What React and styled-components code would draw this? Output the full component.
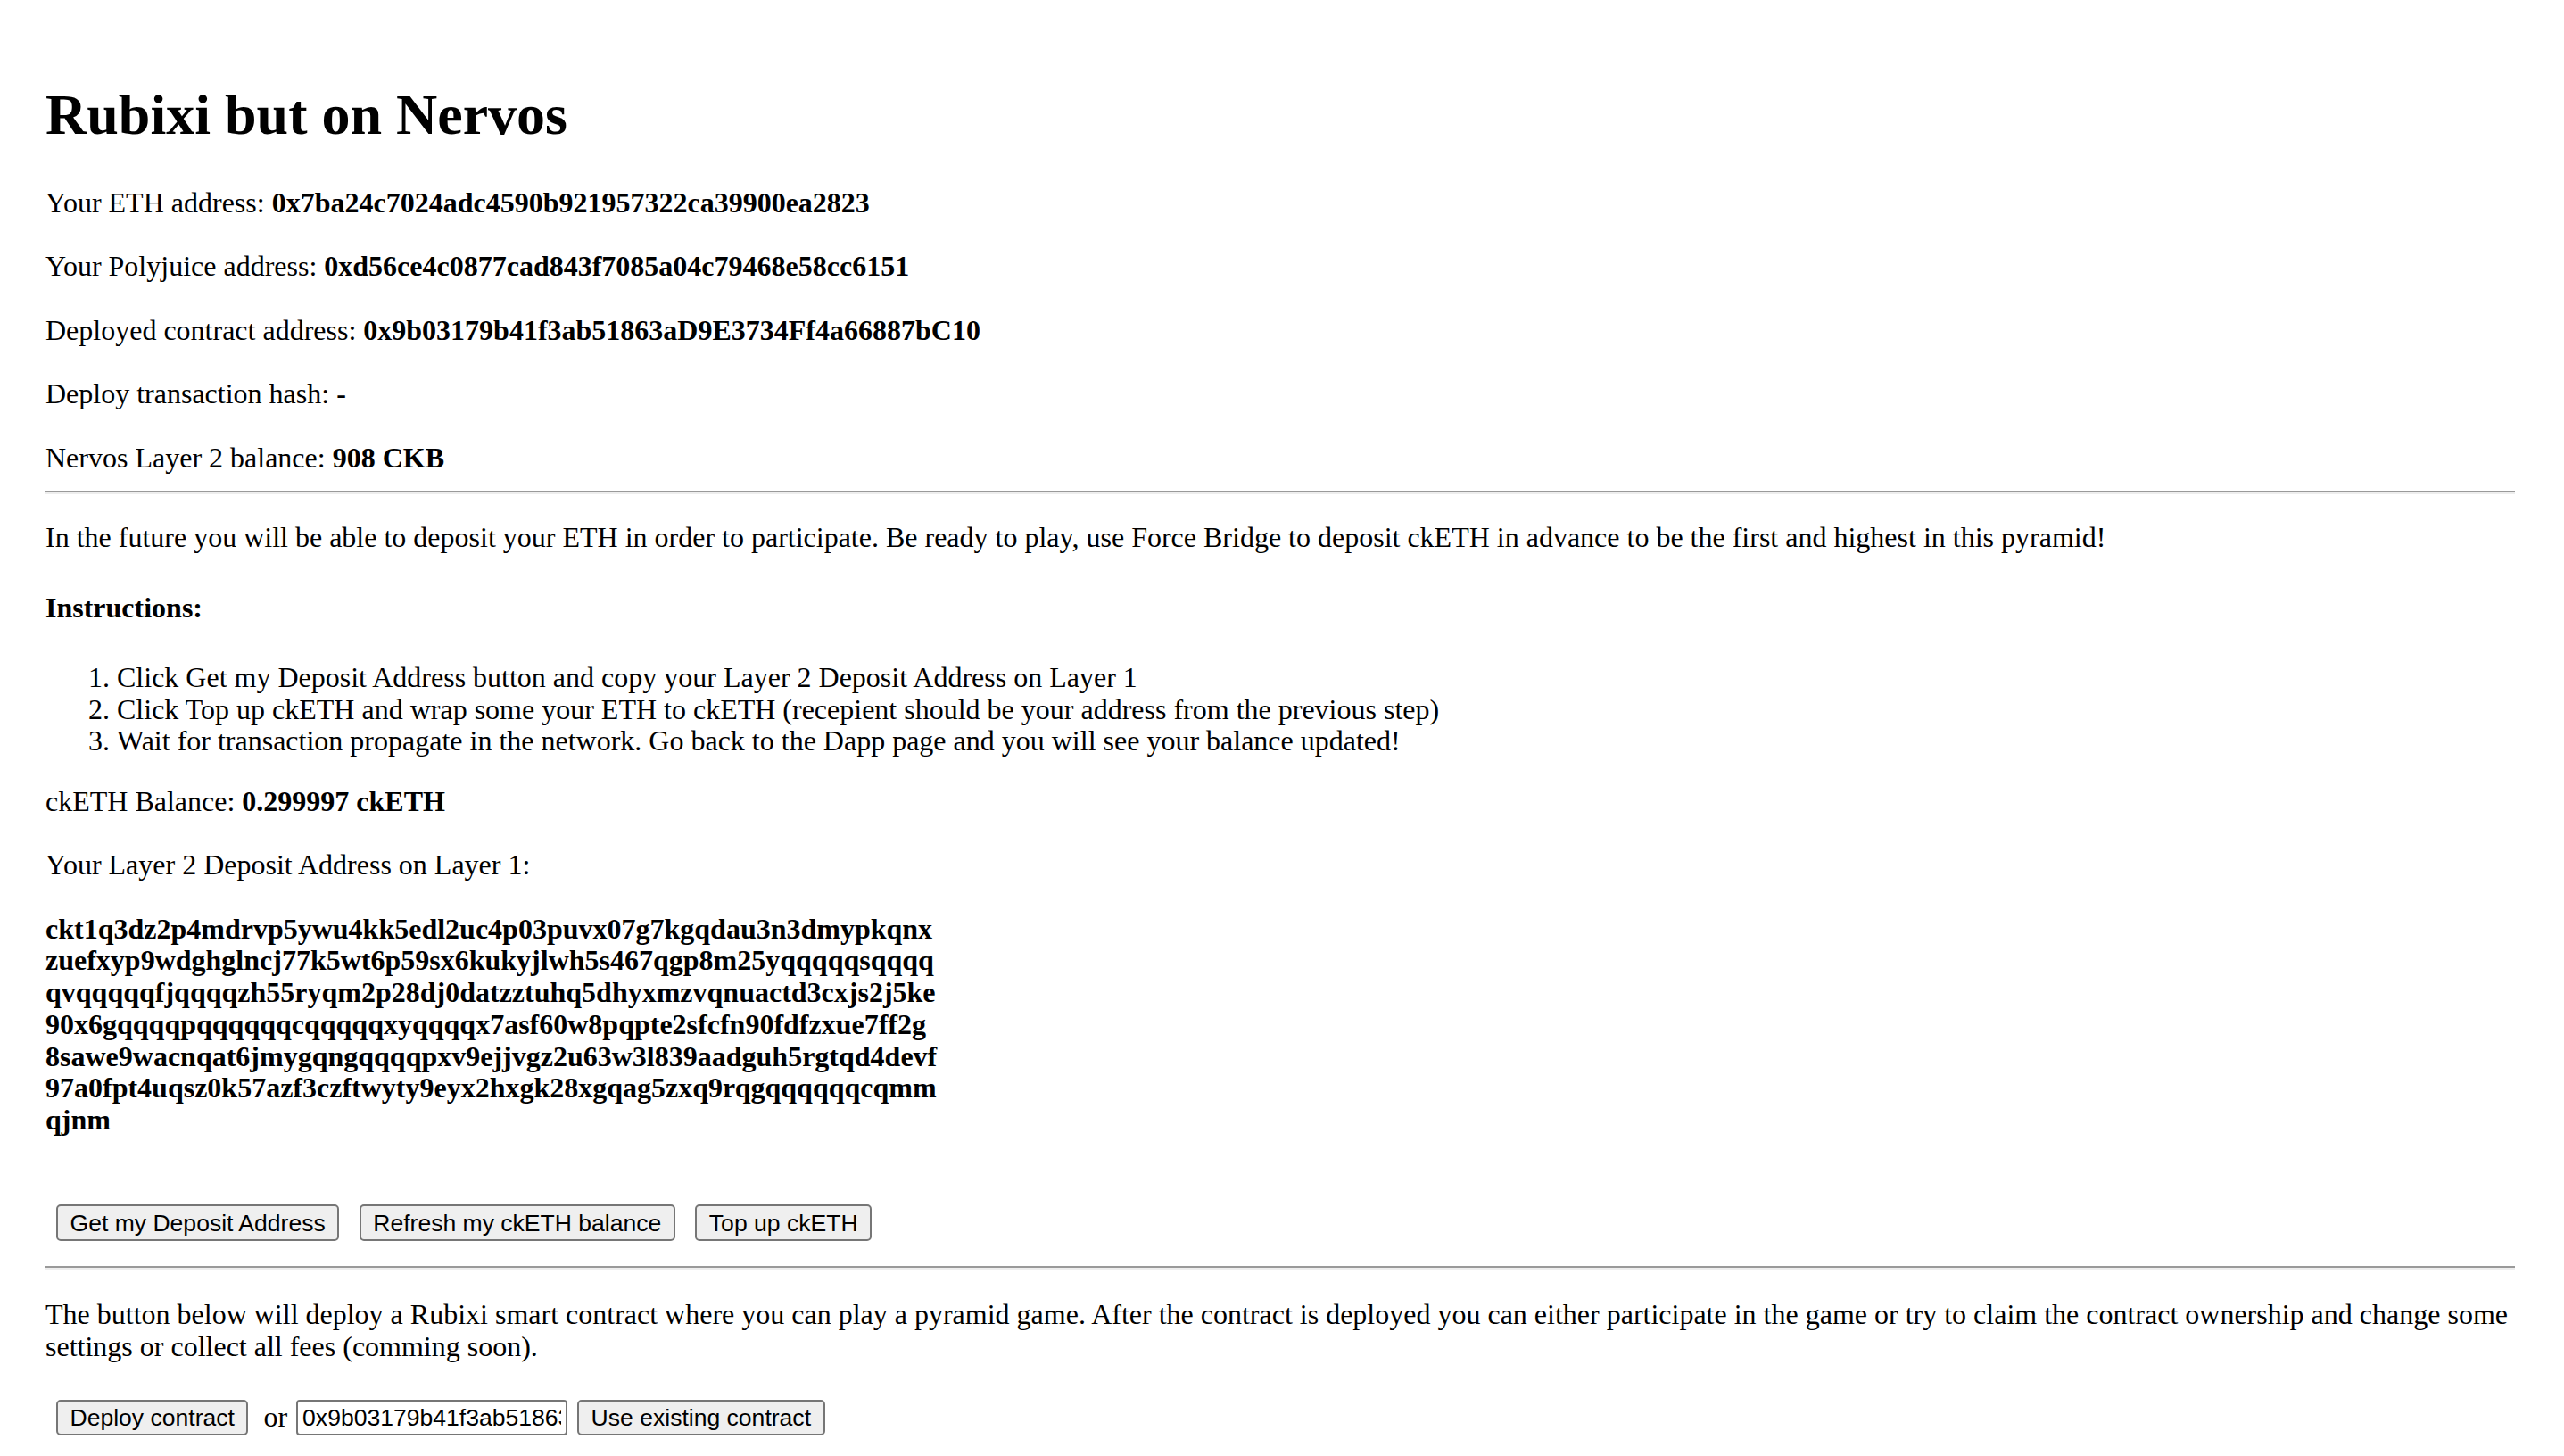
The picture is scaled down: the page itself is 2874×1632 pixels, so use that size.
import React from "react";
import styled, { createGlobalStyle } from "styled-components";

const GlobalStyle = createGlobalStyle`
  html, body {
    margin: 0;
    padding: 0;
    background: #ffffff;
  }
  body {
    font-family: "Liberation Serif", "Times New Roman", Times, serif;
    font-size: 32px;
    color: #000000;
  }
`;

const Page = styled.div`
  box-sizing: border-box;
  width: 100%;
  padding: 92px 55px 0 51px;
  font-family: "Liberation Serif", "Times New Roman", Times, serif;
  font-size: 32px;
  line-height: 35.75px;
  color: #000;
`;

const Title = styled.h1`
  margin: 0;
  font-size: 64px;
  line-height: 74px;
  font-weight: 700;
`;

const InfoList = styled.div`
  display: flex;
  flex-direction: column;
  align-items: flex-start;
  gap: 35.75px;
  margin-top: ${(p) => p.$top}px;
`;

const InfoLine = styled.div`
  line-height: 35.75px;
  white-space: nowrap;
`;

const Value = styled.b`
  font-weight: 700;
`;

const DepositAddress = styled.div`
  width: 1000px;
  font-weight: 700;
  line-height: 35.75px;
  word-break: break-all;
`;

const Rule = styled.hr`
  height: 0;
  margin: ${(p) => p.$top}px 0 0 0;
  border: 0;
  border-top: 2px solid #9a9a9a;
  border-bottom: 2px solid #eeeeee;
`;

const Paragraph = styled.p`
  margin: ${(p) => p.$top}px 0 0 0;
  line-height: 35.75px;
`;

const SubHeading = styled.h4`
  margin: 42.6px 0 0 0;
  font-size: 32px;
  line-height: 35.75px;
  font-weight: 700;
`;

const Steps = styled.ol`
  margin: 42.5px 0 0 0;
  padding-left: 80px;
  line-height: 35.75px;
`;

const ButtonRow = styled.div`
  display: flex;
  align-items: center;
  margin-top: ${(p) => p.$top}px;
  padding-left: 12px;
  gap: ${(p) => p.$gap || 0}px;
`;

const Button = styled.button`
  box-sizing: border-box;
  height: ${(p) => p.$h || 41}px;
  padding: 0 13.5px;
  margin: 0;
  font-family: "Liberation Sans", Arial, Helvetica, sans-serif;
  font-size: 26.55px;
  line-height: 1;
  color: #000;
  background: #efefef;
  border: 2px solid #767676;
  border-radius: 5px;
  white-space: nowrap;
  cursor: default;
`;

const OrText = styled.span`
  margin: 0 10px 0 17px;
  font-size: 32px;
  line-height: 35.75px;
`;

const AddressInput = styled.input`
  box-sizing: border-box;
  width: 304px;
  height: 40px;
  margin: 0 11px 0 0;
  padding: 0 5px;
  font-family: "Liberation Sans", Arial, Helvetica, sans-serif;
  font-size: 26.55px;
  color: #000;
  background: #fff;
  border: 2px solid #767676;
  border-radius: 4px;
  outline: none;
`;

export default function App() {
  return (
    <>
      <GlobalStyle />
      <Page>
        <Title>Rubixi but on Nervos</Title>
        <InfoList $top={43.5}>
          <InfoLine>
            Your ETH address: <Value>0x7ba24c7024adc4590b921957322ca39900ea2823</Value>
          </InfoLine>
          <InfoLine>
            Your Polyjuice address: <Value>0xd56ce4c0877cad843f7085a04c79468e58cc6151</Value>
          </InfoLine>
          <InfoLine>
            Deployed contract address: <Value>0x9b03179b41f3ab51863aD9E3734Ff4a66887bC10</Value>
          </InfoLine>
          <InfoLine>
            Deploy transaction hash: <Value>-</Value>
          </InfoLine>
          <InfoLine>
            Nervos Layer 2 balance: <Value>908 CKB</Value>
          </InfoLine>
        </InfoList>
        <Rule $top={18.5} />
        <Paragraph $top={31.5}>
          In the future you will be able to deposit your ETH in order to participate. Be ready to play, use Force Bridge to deposit ckETH in advance to be the first and highest in this pyramid!
        </Paragraph>
        <SubHeading>Instructions:</SubHeading>
        <Steps>
          <li>Click Get my Deposit Address button and copy your Layer 2 Deposit Address on Layer 1</li>
          <li>Click Top up ckETH and wrap some your ETH to ckETH (recepient should be your address from the previous step)</li>
          <li>Wait for transaction propagate in the network. Go back to the Dapp page and you will see your balance updated!</li>
        </Steps>
        <InfoList $top={31.5}>
          <InfoLine>
            ckETH Balance: <Value>0.299997 ckETH</Value>
          </InfoLine>
          <InfoLine>Your Layer 2 Deposit Address on Layer 1:</InfoLine>
          <DepositAddress>
            ckt1q3dz2p4mdrvp5ywu4kk5edl2uc4p03puvx07g7kgqdau3n3dmypkqnxzuefxyp9wdghglncj77k5wt6p59sx6kukyjlwh5s467qgp8m25yqqqqqsqqqqqvqqqqqfjqqqqzh55ryqm2p28dj0datzztuhq5dhyxmzvqnuactd3cxjs2j5ke90x6gqqqqpqqqqqqcqqqqqxyqqqqx7asf60w8pqpte2sfcfn90fdfzxue7ff2g8sawe9wacnqat6jmygqngqqqqpxv9ejjvgz2u63w3l839aadguh5rgtqd4devf97a0fpt4uqsz0k57azf3czftwyty9eyx2hxgk28xgqag5zxq9rqgqqqqqqcqmmqjnm
          </DepositAddress>
        </InfoList>
        <ButtonRow $top={76.5} $gap={22.5}>
          <Button>Get my Deposit Address</Button>
          <Button>Refresh my ckETH balance</Button>
          <Button>Top up ckETH</Button>
        </ButtonRow>
        <Rule $top={28} />
        <Paragraph $top={32.5}>
          The button below will deploy a Rubixi smart contract where you can play a pyramid game. After the contract is deployed you can either participate in the game or try to claim the contract ownership and change some settings or collect all fees (comming soon).
        </Paragraph>
        <ButtonRow $top={42}>
          <Button $h={40}>Deploy contract</Button>
          <OrText>or</OrText>
          <AddressInput defaultValue="0x9b03179b41f3ab51863aD9E3734Ff4a66887bC10" />
          <Button $h={40}>Use existing contract</Button>
        </ButtonRow>
      </Page>
    </>
  );
}
